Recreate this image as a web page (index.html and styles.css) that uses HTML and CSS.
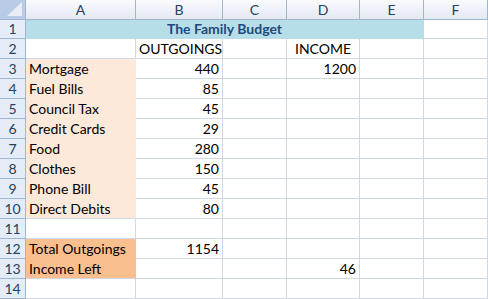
FILE: index.html
```html
<!DOCTYPE html>
<html lang="en">
<head>
    <meta charset="UTF-8">
    <meta name="viewport" content="width=device-width, initial-scale=1.0">
    <title>The Family Budget</title>
    <link rel="stylesheet" href="styles.css">
</head>
<body>
    <table class="sheet">
        <colgroup>
            <col class="col-head">
            <col class="col-a">
            <col class="col-b">
            <col class="col-c">
            <col class="col-d">
            <col class="col-e">
            <col class="col-f">
        </colgroup>
        <thead>
            <tr class="letters">
                <th class="corner"><span class="corner-mark"></span></th>
                <th>A</th>
                <th>B</th>
                <th>C</th>
                <th>D</th>
                <th>E</th>
                <th>F</th>
            </tr>
        </thead>
        <tbody>
            <tr class="row-title">
                <th>1</th>
                <td colspan="5" class="title">The Family Budget</td>
                <td></td>
            </tr>
            <tr>
                <th>2</th>
                <td></td>
                <td class="center">OUTGOINGS</td>
                <td></td>
                <td class="center">INCOME</td>
                <td></td>
                <td></td>
            </tr>
            <tr>
                <th>3</th>
                <td class="item">Mortgage</td>
                <td class="num">440</td>
                <td></td>
                <td class="num">1200</td>
                <td></td>
                <td></td>
            </tr>
            <tr>
                <th>4</th>
                <td class="item">Fuel Bills</td>
                <td class="num">85</td>
                <td></td><td></td><td></td><td></td>
            </tr>
            <tr>
                <th>5</th>
                <td class="item">Council Tax</td>
                <td class="num">45</td>
                <td></td><td></td><td></td><td></td>
            </tr>
            <tr>
                <th>6</th>
                <td class="item">Credit Cards</td>
                <td class="num">29</td>
                <td></td><td></td><td></td><td></td>
            </tr>
            <tr>
                <th>7</th>
                <td class="item">Food</td>
                <td class="num">280</td>
                <td></td><td></td><td></td><td></td>
            </tr>
            <tr>
                <th>8</th>
                <td class="item">Clothes</td>
                <td class="num">150</td>
                <td></td><td></td><td></td><td></td>
            </tr>
            <tr>
                <th>9</th>
                <td class="item">Phone Bill</td>
                <td class="num">45</td>
                <td></td><td></td><td></td><td></td>
            </tr>
            <tr>
                <th>10</th>
                <td class="item item-last">Direct Debits</td>
                <td class="num">80</td>
                <td></td><td></td><td></td><td></td>
            </tr>
            <tr>
                <th>11</th>
                <td></td><td></td><td></td><td></td><td></td><td></td>
            </tr>
            <tr>
                <th>12</th>
                <td class="total">Total Outgoings</td>
                <td class="num">1154</td>
                <td></td><td></td><td></td><td></td>
            </tr>
            <tr>
                <th>13</th>
                <td class="total total-last">Income Left</td>
                <td></td>
                <td></td>
                <td class="num">46</td>
                <td></td>
                <td></td>
            </tr>
            <tr>
                <th>14</th>
                <td></td><td></td><td></td><td></td><td></td><td></td>
            </tr>
        </tbody>
    </table>
</body>
</html>
```

FILE: styles.css
```css
body {
    margin: 0;
    background-color: #ffffff;
    font-family: Lato, "Open Sans", sans-serif;
    overflow: hidden;
}

.sheet {
    border-collapse: separate;
    border-spacing: 0;
    table-layout: fixed;
    width: 488px;
    font-size: 14px;
    color: #000000;
}

.col-head { width: 26px; }
.col-a { width: 110px; }
.col-b { width: 87px; }
.col-c { width: 64px; }
.col-d { width: 73px; }
.col-e { width: 64px; }
.col-f { width: 64px; }

.sheet td,
.sheet th {
    box-sizing: border-box;
    height: 20px;
    padding: 0 3px;
    border-right: 1px solid #d0d7e5;
    border-bottom: 1px solid #d0d7e5;
    line-height: 18px;
    white-space: nowrap;
    overflow: hidden;
    font-weight: normal;
    vertical-align: bottom;
}

/* column letters */
.sheet .letters th {
    text-align: center;
    color: #27415f;
    background: linear-gradient(#f9fbfd, #e4e9f2);
    border-right-color: #9eb6ce;
    border-bottom-color: #9eb6ce;
}

.sheet .letters th.corner {
    position: relative;
    padding: 0;
    background-color: #b9cbe6;
    background-image: none;
}

.corner-mark {
    position: absolute;
    right: 3px;
    bottom: 3px;
    width: 0;
    height: 0;
    border-left: 15px solid transparent;
    border-bottom: 14px solid #e9eef6;
}

/* row numbers */
.sheet tbody th {
    text-align: center;
    color: #27415f;
    background-color: #e4ecf7;
    border-right-color: #9eb6ce;
    border-bottom-color: #9eb6ce;
    padding: 0;
}

.sheet .row-title td,
.sheet .row-title th {
    height: 19px;
}

.sheet .title {
    text-align: center;
    font-weight: bold;
    color: #1f497d;
    background-color: #b7dee8;
    border-right-color: #b7dee8;
    border-bottom-color: #b7dee8;
}

.center {
    text-align: center;
}

.num {
    text-align: right;
}

/* filled cells hide the gridlines */
.sheet .item {
    background-color: #fde9d9;
    border-right-color: #fde9d9;
    border-bottom-color: #fde9d9;
}

.sheet .item-last {
    border-bottom-color: #d0d7e5;
}

.sheet .total {
    background-color: #fabf8f;
    border-right-color: #fabf8f;
    border-bottom-color: #fabf8f;
}

.sheet .total-last {
    border-bottom-color: #d0d7e5;
}
```
